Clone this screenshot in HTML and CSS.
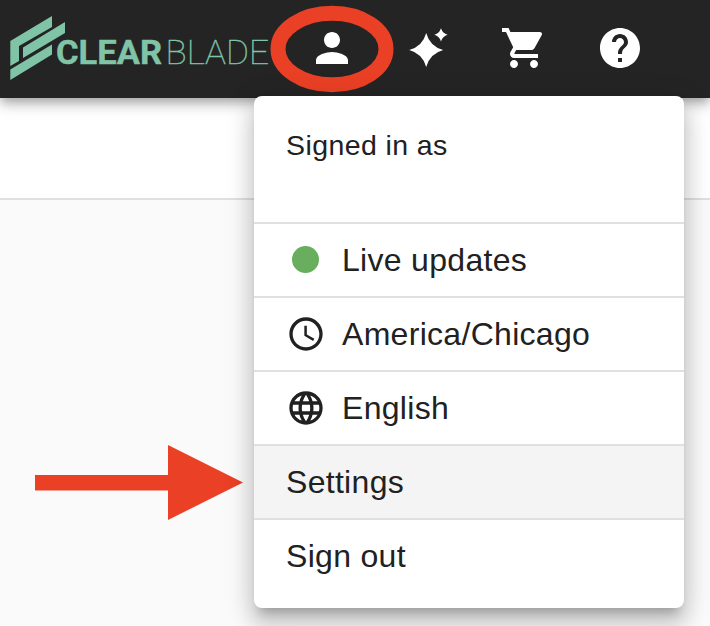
FILE: index.html
```html
<!DOCTYPE html>
<html lang="en">
<head>
<meta charset="utf-8">
<title>ClearBlade</title>
<link rel="stylesheet" href="styles.css">
</head>
<body>
<header class="topbar">
  <svg class="logo" viewBox="0 0 272 98" role="img" aria-label="ClearBlade">
    <path d="M10.3 41 52 16V27L19 46V61L10.3 66ZM23 47.5 65 22V33L23 58ZM10.3 69.5 52 44.5V54.5L10.3 80Z"/>
    <text class="logo-bold" x="56" y="64.3" textLength="106" lengthAdjust="spacingAndGlyphs">CLEAR</text>
    <text class="logo-thin" x="165.500" y="64.3" textLength="103.500" lengthAdjust="spacingAndGlyphs">BLADE</text>
  </svg>
  <nav class="actions">
    <svg class="action" viewBox="0 0 24 24"><path d="M12 12c2.21 0 4-1.79 4-4s-1.79-4-4-4-4 1.79-4 4 1.790 4 4 4zm0 2c-2.670 0-8 1.340-8 4v2h16v-2c0-2.660-5.330-4-8-4z"/></svg>
    <svg class="action" viewBox="0 0 24 24"><path d="M11.100 4.500Q12.900 11.200 19.600 13Q12.900 14.800 11.100 21.500Q9.300 14.800 2.600 13Q9.300 11.200 11.100 4.500ZM18.500 2.100Q19.300 4.600 21.800 5.400Q19.300 6.200 18.500 8.700Q17.700 6.200 15.200 5.400Q17.700 4.600 18.500 2.100Z"/></svg>
    <svg class="action" viewBox="0 0 24 24"><path d="M7 18c-1.100 0-1.990.9-1.990 2S5.900 22 7 22s2-.9 2-2-.9-2-2-2zM1 2v2h2l3.600 7.590-1.350 2.450c-.16.28-.25.61-.25.96 0 1.100.9 2 2 2h12v-2H7.420c-.14 0-.25-.11-.25-.25l.03-.12.9-1.630h7.450c.75 0 1.410-.41 1.750-1.030l3.580-6.490c.08-.14.12-.31.12-.48 0-.55-.45-1-1-1H5.210l-.94-2H1zm16 16c-1.100 0-1.990.9-1.990 2s.89 2 1.990 2 2-.9 2-2-.9-2-2-2z"/></svg>
    <svg class="action" viewBox="0 0 24 24"><path d="M12 2C6.480 2 2 6.480 2 12s4.480 10 10 10 10-4.480 10-10S17.520 2 12 2zm1 17h-2v-2h2v2zm2.070-7.750l-.9.920C13.450 12.900 13 13.500 13 15h-2v-.5c0-1.100.45-2.100 1.170-2.830l1.240-1.260c.37-.36.59-.86.59-1.410 0-1.100-.9-2-2-2s-2 .9-2 2H8c0-2.210 1.790-4 4-4s4 1.790 4 4c0 .88-.36 1.680-.93 2.250z"/></svg>
  </nav>
</header>
<main class="page"><div class="toolbar"></div></main>

<svg class="ring" viewBox="0 0 124 88"><ellipse cx="62" cy="44" rx="54" ry="35.700"/></svg>
<svg class="arrow" viewBox="0 0 208 76"><path d="M0 30H133V0L208 37.500 133 75V45.500H0Z"/></svg>

<div class="menu">
  <div class="account">Signed in as</div>
  <div class="item"><span class="icon"><span class="status"></span></span><span>Live updates</span></div>
  <div class="item"><svg class="icon" viewBox="0 0 24 24"><path d="M11.990 2C6.470 2 2 6.480 2 12s4.470 10 9.990 10C17.520 22 22 17.520 22 12S17.520 2 11.990 2zM12 20c-4.420 0-8-3.580-8-8s3.580-8 8-8 8 3.580 8 8-3.580 8-8 8zm.5-13H11v6l5.250 3.150.75-1.230-4.500-2.670z"/></svg><span>America/Chicago</span></div>
  <div class="item"><svg class="icon" viewBox="0 0 24 24"><path d="M11.990 2C6.470 2 2 6.480 2 12s4.470 10 9.990 10C17.520 22 22 17.520 22 12S17.520 2 11.990 2zm6.930 6h-2.950c-.32-1.250-.78-2.450-1.380-3.560 1.840.63 3.370 1.910 4.330 3.560zM12 4.040c.83 1.200 1.480 2.530 1.910 3.960h-3.820c.43-1.430 1.080-2.760 1.910-3.960zM4.260 14C4.100 13.360 4 12.690 4 12s.1-1.360.26-2h3.380c-.08.66-.14 1.320-.14 2s.06 1.340.14 2H4.260zm.82 2h2.950c.32 1.250.78 2.450 1.380 3.560-1.840-.63-3.370-1.900-4.330-3.560zm2.950-8H5.080c.96-1.660 2.490-2.930 4.330-3.560C8.810 5.550 8.350 6.750 8.030 8zM12 19.960c-.83-1.200-1.480-2.530-1.910-3.960h3.820c-.43 1.430-1.080 2.760-1.910 3.960zM14.340 14H9.660c-.09-.66-.16-1.320-.16-2s.07-1.350.16-2h4.680c.09.65.16 1.320.16 2s-.07 1.340-.16 2zm.25 5.560c.6-1.110 1.060-2.310 1.380-3.560h2.950c-.96 1.650-2.490 2.930-4.330 3.560zM16.360 14c.08-.66.14-1.320.14-2s-.06-1.340-.14-2h3.380c.16.64.26 1.310.26 2s-.1 1.360-.26 2h-3.380z"/></svg><span>English</span></div>
  <div class="item selected">Settings</div>
  <div class="item">Sign out</div>
</div>
</body>
</html>
```
FILE: styles.css
```css
* { box-sizing: border-box; }

body {
  margin: 0;
  height: 626px;
  position: relative;
  overflow: hidden;
  background: #fafafa;
  color: #212121;
  font-family: "Liberation Sans", Arial, sans-serif;
}

.topbar {
  position: relative;
  display: flex;
  align-items: center;
  gap: 36px;
  height: 98px;
  background: #242424;
  box-shadow: 0 4px 8px -2px rgba(0, 0, 0, .2), 0 8px 10px rgba(0, 0, 0, .14), 0 2px 20px rgba(0, 0, 0, .12);
}

.logo { width: 272px; height: 98px; fill: #80c4a8; }
.logo-bold { font: 700 34px Roboto, sans-serif; stroke: #80c4a8; stroke-width: .4; }
.logo-thin { font: 100 34px Roboto, sans-serif; stroke: #80c4a8; stroke-width: .4; }

.actions { display: flex; gap: 48px; margin-bottom: 2px; }
.action { width: 48px; height: 48px; fill: #fff; }

.toolbar { height: 102px; background: #fff; border-bottom: 2px solid #e0e0e0; }

.ring { position: absolute; left: 270px; top: 5px; width: 124px; height: 88px; }
.ring ellipse { fill: none; stroke: #ea4025; stroke-width: 15; }

.arrow { position: absolute; left: 35px; top: 445px; width: 208px; height: 76px; fill: #ea4025; }

.menu {
  position: absolute;
  left: 254px;
  top: 96px;
  width: 430px;
  height: 512px;
  border-radius: 8px;
  background: #fff;
  box-shadow: 0 10px 10px -6px rgba(0, 0, 0, .2), 0 16px 20px 2px rgba(0, 0, 0, .14), 0 6px 28px 4px rgba(0, 0, 0, .12);
}

.account {
  height: 128px;
  padding: 29px 32px;
  border-bottom: 2px solid #e0e0e0;
  font-size: 28.500px;
  line-height: 40px;
  letter-spacing: .4px;
}

.item {
  display: flex;
  align-items: center;
  gap: 16px;
  height: 74px;
  padding: 0 32px;
  border-bottom: 2px solid #e0e0e0;
  font-size: 32px;
  letter-spacing: .3px;
}
.item:last-child { border-bottom: 0; height: 72px; }
.selected { background: #f4f4f4; }

.icon {
  display: flex;
  align-items: center;
  justify-content: center;
  width: 40px;
  height: 40px;
  fill: #212121;
}
.status { width: 27px; height: 27px; margin: 0 1px 1px 0; border-radius: 50%; background: #69ae5f; }
```
